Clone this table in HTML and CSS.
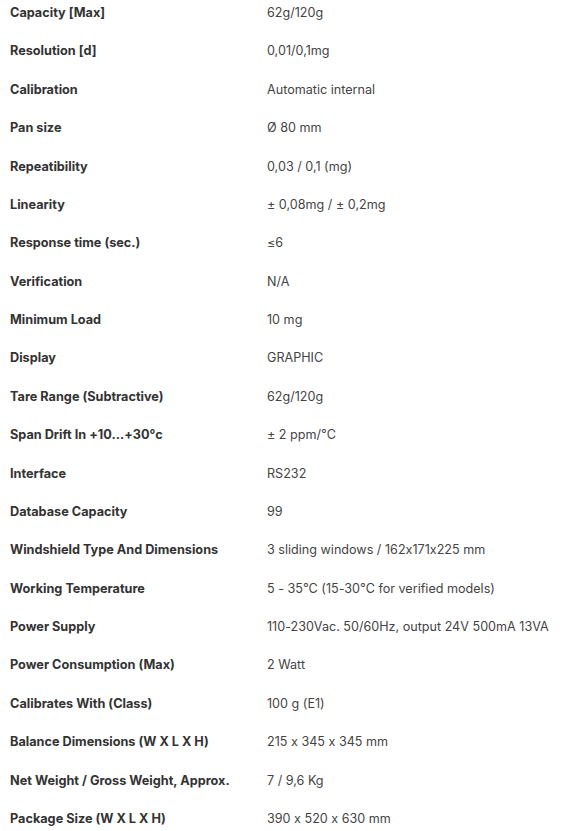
FILE: index.html
```html
<!DOCTYPE html>
<html>
<head>
<meta charset="utf-8">
<link rel="stylesheet" href="styles.css">
</head>
<body>
<div class="specs">
  <div class="row"><div class="label">Capacity [Max]</div><div class="value">62g/120g</div></div>
  <div class="row"><div class="label">Resolution [d]</div><div class="value">0,01/0,1mg</div></div>
  <div class="row"><div class="label">Calibration</div><div class="value">Automatic internal</div></div>
  <div class="row"><div class="label">Pan size</div><div class="value">Ø 80 mm</div></div>
  <div class="row"><div class="label">Repeatibility</div><div class="value">0,03 / 0,1 (mg)</div></div>
  <div class="row"><div class="label">Linearity</div><div class="value">± 0,08mg / ± 0,2mg</div></div>
  <div class="row"><div class="label">Response time (sec.)</div><div class="value">≤6</div></div>
  <div class="row"><div class="label">Verification</div><div class="value">N/A</div></div>
  <div class="row"><div class="label">Minimum Load</div><div class="value">10 mg</div></div>
  <div class="row"><div class="label">Display</div><div class="value">GRAPHIC</div></div>
  <div class="row"><div class="label">Tare Range (Subtractive)</div><div class="value">62g/120g</div></div>
  <div class="row"><div class="label">Span Drift In +10...+30°c</div><div class="value">± 2 ppm/°C</div></div>
  <div class="row"><div class="label">Interface</div><div class="value">RS232</div></div>
  <div class="row"><div class="label">Database Capacity</div><div class="value">99</div></div>
  <div class="row"><div class="label">Windshield Type And Dimensions</div><div class="value">3 sliding windows / 162x171x225 mm</div></div>
  <div class="row"><div class="label">Working Temperature</div><div class="value">5 - 35°C (15-30°C for verified models)</div></div>
  <div class="row"><div class="label">Power Supply</div><div class="value">110-230Vac. 50/60Hz, output 24V 500mA 13VA</div></div>
  <div class="row"><div class="label">Power Consumption (Max)</div><div class="value">2 Watt</div></div>
  <div class="row"><div class="label">Calibrates With (Class)</div><div class="value">100 g (E1)</div></div>
  <div class="row"><div class="label">Balance Dimensions (W X L X H)</div><div class="value">215 x 345 x 345 mm</div></div>
  <div class="row"><div class="label">Net Weight / Gross Weight, Approx.</div><div class="value">7 / 9,6 Kg</div></div>
  <div class="row"><div class="label">Package Size (W X L X H)</div><div class="value">390 x 520 x 630 mm</div></div>
</div>
</body>
</html>
```
FILE: styles.css
```css
html, body {
  margin: 0;
  padding: 0;
  background: #fff;
}
body {
  font-family: Inter, "Open Sans", sans-serif;
  font-size: 12.7px;
  color: #333;
  font-feature-settings: "calt" 0;
}
.specs {
  display: flex;
  flex-direction: column;
  padding: 0 10px;
}
.row {
  display: flex;
  height: 38.38px;
  box-sizing: border-box;
  padding-top: 5px;
  line-height: 16px;
}
.label {
  width: 257px;
  flex: none;
  font-weight: 700;
  color: #333;
}
.value {
  font-size: 12.6px;
  color: #444;
}
```
